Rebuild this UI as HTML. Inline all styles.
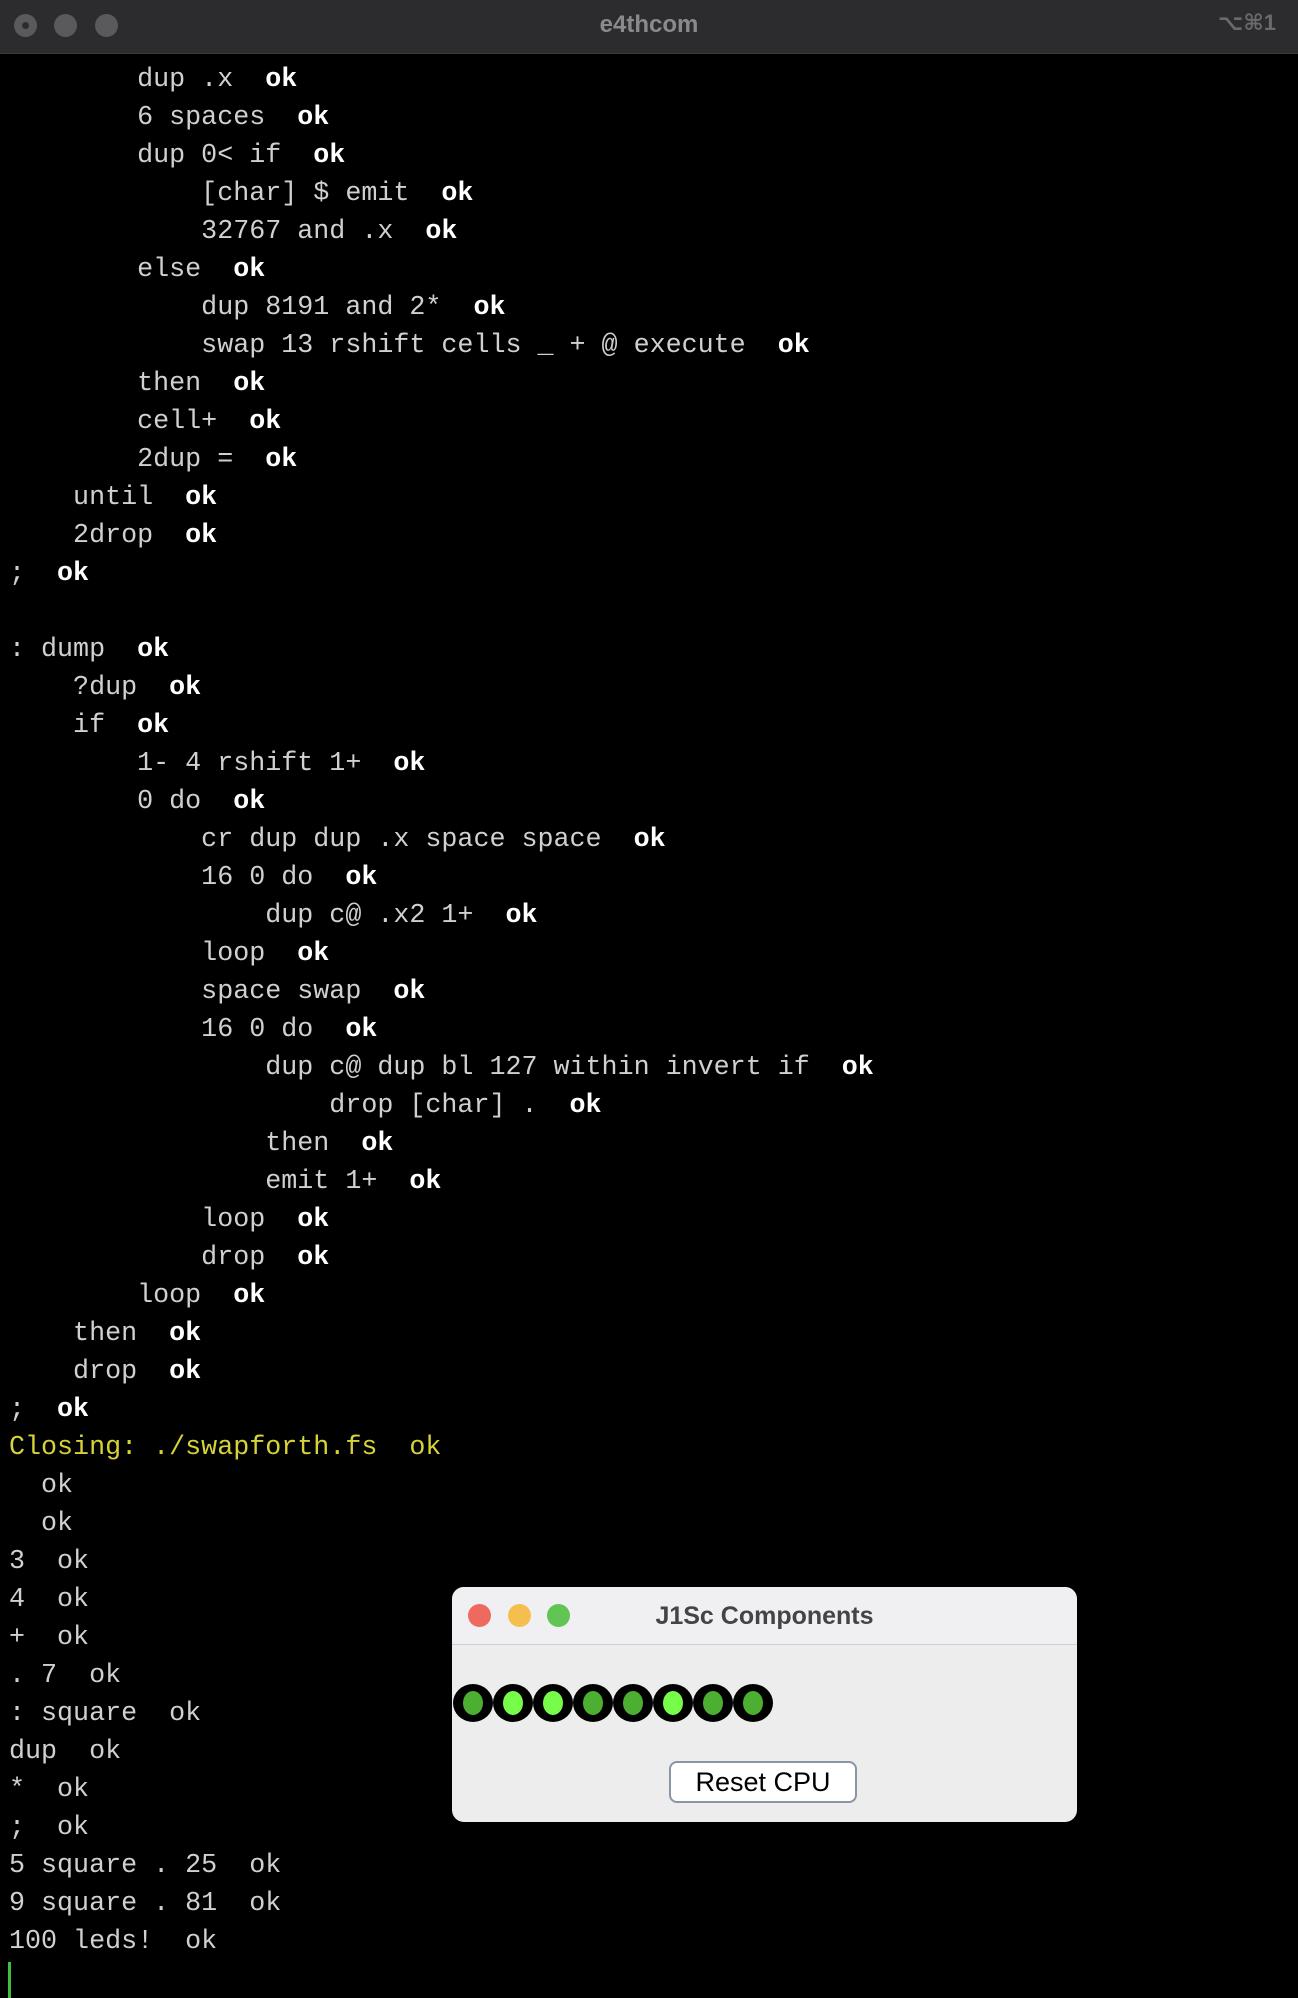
<!DOCTYPE html>
<html><head><meta charset="utf-8"><style>
html,body{margin:0;padding:0;background:#000;width:1298px;height:1998px;overflow:hidden;position:relative}
.tb{position:absolute;left:0;top:0;width:1298px;height:53px;background:#2c2c2e;border-bottom:1px solid #3a3a3c}
.tl{position:absolute;top:14px;width:23px;height:23px;border-radius:50%;background:#5a5a5c}
.ttl{position:absolute;top:11px;left:0;width:1298px;text-align:center;font:bold 24px "Liberation Sans",sans-serif;color:#8a8a8c}
.kb{position:absolute;top:10px;right:22px;font:bold 22px "Liberation Sans","DejaVu Sans",sans-serif;color:#6a6a6c}
pre{position:absolute;left:9px;top:61px;margin:0;font:26.7px/38px "Liberation Mono",monospace;color:#d0d0d0}
b{color:#fff;font-weight:bold}
.y{color:#d6d238}
.cur{position:absolute;left:8px;top:1962px;width:3px;height:36px;background:#3fbf3f}
.pop{position:absolute;left:452px;top:1587px;width:625px;height:235px;background:#ededed;border-radius:12px;overflow:hidden}
.ptb{position:absolute;left:0;top:0;width:625px;height:57px;background:#f0f0f2;border-bottom:1px solid #cfcfcf}
.pl{position:absolute;top:17px;width:23px;height:23px;border-radius:50%}
.pt{position:absolute;top:15px;left:0;width:625px;text-align:center;font:bold 25px "Liberation Sans",sans-serif;color:#444}
.led{position:absolute;top:97px;width:40px;height:38px;border-radius:50%;background:#000}
.led i{position:absolute;left:10px;top:7px;width:20px;height:24px;border-radius:50%;background:#4caf32}
.led.b i{background:#77fc4a}
.btn{position:absolute;left:217px;top:174px;width:188px;height:42px;box-sizing:border-box;border:2px solid #8a95a5;border-radius:8px;background:#fff;text-align:center;font:27px/38px "Liberation Sans",sans-serif;color:#000}
</style></head><body>
<div class="tb">
<div class="tl" style="left:14px"><div style="position:absolute;left:8px;top:8px;width:7px;height:7px;border-radius:50%;background:#2c2c2e"></div></div>
<div class="tl" style="left:54px"></div>
<div class="tl" style="left:95px"></div>
<div class="ttl">e4thcom</div>
<div class="kb">⌥⌘1</div>
</div>
<pre>        dup .x  <b>ok</b>
        6 spaces  <b>ok</b>
        dup 0&lt; if  <b>ok</b>
            [char] $ emit  <b>ok</b>
            32767 and .x  <b>ok</b>
        else  <b>ok</b>
            dup 8191 and 2*  <b>ok</b>
            swap 13 rshift cells _ + @ execute  <b>ok</b>
        then  <b>ok</b>
        cell+  <b>ok</b>
        2dup =  <b>ok</b>
    until  <b>ok</b>
    2drop  <b>ok</b>
;  <b>ok</b>

: dump  <b>ok</b>
    ?dup  <b>ok</b>
    if  <b>ok</b>
        1- 4 rshift 1+  <b>ok</b>
        0 do  <b>ok</b>
            cr dup dup .x space space  <b>ok</b>
            16 0 do  <b>ok</b>
                dup c@ .x2 1+  <b>ok</b>
            loop  <b>ok</b>
            space swap  <b>ok</b>
            16 0 do  <b>ok</b>
                dup c@ dup bl 127 within invert if  <b>ok</b>
                    drop [char] .  <b>ok</b>
                then  <b>ok</b>
                emit 1+  <b>ok</b>
            loop  <b>ok</b>
            drop  <b>ok</b>
        loop  <b>ok</b>
    then  <b>ok</b>
    drop  <b>ok</b>
;  <b>ok</b>
<span class="y">Closing: ./swapforth.fs  ok</span>
  ok
  ok
3  ok
4  ok
+  ok
. 7  ok
: square  ok
dup  ok
*  ok
;  ok
5 square . 25  ok
9 square . 81  ok
100 leds!  ok</pre>
<div class="cur"></div>
<div class="pop">
<div class="ptb">
<div class="pl" style="left:16px;background:#ee6a5f"></div>
<div class="pl" style="left:56px;background:#f5be4f"></div>
<div class="pl" style="left:95px;background:#61c454"></div>
<div class="pt">J1Sc Components</div>
</div>
<div class="led" style="left:1px"><i></i></div>
<div class="led b" style="left:41px"><i></i></div>
<div class="led b" style="left:81px"><i></i></div>
<div class="led" style="left:121px"><i></i></div>
<div class="led" style="left:161px"><i></i></div>
<div class="led b" style="left:201px"><i></i></div>
<div class="led" style="left:241px"><i></i></div>
<div class="led" style="left:281px"><i></i></div>
<div class="btn">Reset CPU</div>
</div>
</body></html>
